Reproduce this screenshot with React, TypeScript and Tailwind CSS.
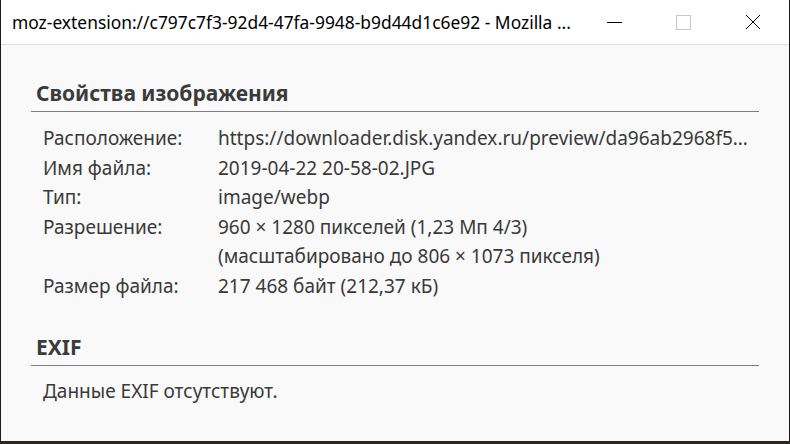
import React from 'react';

const rows: { label: string; value: string[] }[] = [
  { label: 'Расположение:', value: ['https://downloader.disk.yandex.ru/preview/da96ab2968f5c3e1b7d0a9f4e2c6b8a1d3f5e7c9b0a2d4f6e8c1b3a5d7f9e0c2'] },
  { label: 'Имя файла:', value: ['2019-04-22 20-58-02.JPG'] },
  { label: 'Тип:', value: ['image/webp'] },
  { label: 'Разрешение:', value: ['960 × 1280 пикселей (1,23 Мп 4/3)', '(масштабировано до 806 × 1073 пикселя)'] },
  { label: 'Размер файла:', value: ['217 468 байт (212,37 кБ)'] },
];

export default function App() {
  return (
    <div className="h-[444px] w-[790px] overflow-hidden bg-[#2b2720]" style={{ fontFamily: '"Noto Sans", "Open Sans", sans-serif' }}>
      <div className="flex h-[441px] flex-col border-x border-[#1a1a1a] bg-[#f9f9f9]">
        {/* Title bar */}
        <div className="flex h-[45px] shrink-0 items-center border-b border-[#dcdcdc] bg-white">
          <div className="flex-1 truncate pl-[11px] text-[17.4px] text-black">
            moz-extension://c797c7f3-92d4-47fa-9948-b9d44d1c6e92 - Mozilla ...
          </div>
          <div className="flex h-full">
            <div className="flex w-[69px] items-center justify-center">
              <div className="h-px w-[15px] bg-black" />
            </div>
            <div className="flex w-[69px] items-center justify-center">
              <div className="h-[15px] w-[15px] border border-[#c8c8c8]" />
            </div>
            <div className="flex w-[71px] items-center justify-center pr-[2px]">
              <svg width="16" height="16" viewBox="0 0 16 16" fill="none" stroke="#000" strokeWidth="1">
                <path d="M1 1L15 15M15 1L1 15" />
              </svg>
            </div>
          </div>
        </div>

        {/* Content */}
        <div className="px-[30px] pt-[34px] text-[#333]">
          <h2 className="border-b border-[#7f7f7f] pb-[3px] pl-[5px] text-[21px] font-bold leading-[29px] text-[#3b3b3b]">
            Свойства изображения
          </h2>
          <div className="pt-[12px] pl-[12px] pr-[6px]">
            {rows.map((r) => (
              <div key={r.label} className="flex text-[19px] leading-[29.6px] text-[#3a3a3a]">
                <div className="w-[175px] shrink-0">{r.label}</div>
                <div className="min-w-0 flex-1">
                  {r.value.map((v) => (
                    <div key={v} className="truncate">{v}</div>
                  ))}
                </div>
              </div>
            ))}
          </div>

          <h2 className="mt-[31px] border-b border-[#7f7f7f] pb-[3px] pl-[5px] text-[21px] font-bold leading-[29px] text-[#3b3b3b]">
            EXIF
          </h2>
          <div className="pt-[11px] pl-[12px] text-[19px] leading-[29.6px] text-[#3a3a3a]">
            Данные EXIF отсутствуют.
          </div>
        </div>
      </div>
    </div>
  );
}
